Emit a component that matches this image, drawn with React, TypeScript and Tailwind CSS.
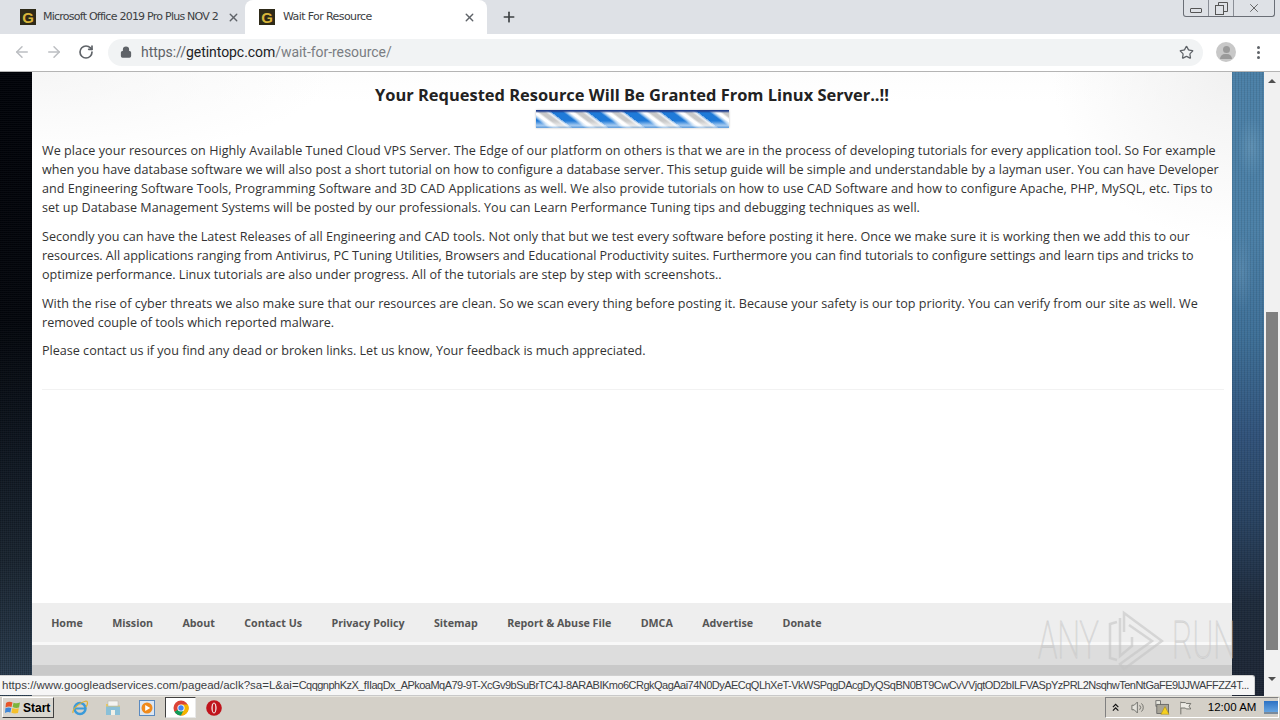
import React from "react";
import { ArrowLeft, ArrowRight, RotateCw, Star, Lock, X, Plus } from "lucide-react";

const Fav = () => (
  <div className="w-4 h-4 bg-[#2e2a18] flex items-center justify-center shrink-0 text-[#d9b53a] font-bold text-[15px] leading-none font-['Liberation_Sans',sans-serif]">G</div>
);

type Line = { t: string; c?: string };

const paragraphs: Line[][] = [
  [
    { t: "We place your resources on Highly Available Tuned Cloud VPS Server. The Edge of our platform on others is that we are in the process of developing tutorials for every application tool. So For example", c: "tracking-[0.055px]" },
    { t: "when you have database software we will also post a short tutorial on how to configure a database server. This setup guide will be simple and understandable by a layman user. You can have Developer", c: "tracking-[0.01px]" },
    { t: "and Engineering Software Tools, Programming Software and 3D CAD Applications as well. We also provide tutorials on how to use CAD Software and how to configure Apache, PHP, MySQL, etc. Tips to", c: "tracking-[0.04px]" },
    { t: "set up Database Management Systems will be posted by our professionals. You can Learn Performance Tuning tips and debugging techniques as well.", c: "tracking-[0.015px]" },
  ],
  [
    { t: "Secondly you can have the Latest Releases of all Engineering and CAD tools. Not only that but we test every software before posting it here. Once we make sure it is working then we add this to our", c: "tracking-[0.015px]" },
    { t: "resources. All applications ranging from Antivirus, PC Tuning Utilities, Browsers and Educational Productivity suites. Furthermore you can find tutorials to configure settings and learn tips and tricks to", c: "tracking-[-0.04px]" },
    { t: "optimize performance. Linux tutorials are also under progress. All of the tutorials are step by step with screenshots.." },
  ],
  [
    { t: "With the rise of cyber threats we also make sure that our resources are clean. So we scan every thing before posting it. Because your safety is our top priority. You can verify from our site as well. We", c: "tracking-[0.01px]" },
    { t: "removed couple of tools which reported malware." },
  ],
  [{ t: "Please contact us if you find any dead or broken links. Let us know, Your feedback is much appreciated." }],
];

const nav = ["Home", "Mission", "About", "Contact Us", "Privacy Policy", "Sitemap", "Report & Abuse File", "DMCA", "Advertise", "Donate"];

export default function App() {
  return (
    <div className="relative w-[1280px] h-[720px] overflow-hidden flex flex-col bg-white font-['Open_Sans',sans-serif]">
      {/* tab strip */}
      <div className="h-[34px] bg-[#dee1e6] flex items-end pl-2 shrink-0 relative">
        <div className="w-[237px] h-[34px] flex items-center pl-3 pr-2 gap-[7px]">
          <Fav />
          <span className="text-[11px] text-[#3c4043] whitespace-nowrap w-[176px] font-['DejaVu_Sans',sans-serif] tracking-[-0.76px]">Microsoft Office 2019 Pro Plus NOV 2</span>
          <X size={13} strokeWidth={2.5} className="text-[#5f6368] ml-[2px] shrink-0" />
        </div>
        <div className="w-[242px] h-[34px] bg-white rounded-t-lg flex items-center pl-[14px] pr-[11px] gap-[8px]">
          <Fav />
          <span className="text-[11px] text-[#3c4043] whitespace-nowrap grow font-['DejaVu_Sans',sans-serif] tracking-[-0.6px]">Wait For Resource</span>
          <X size={13} strokeWidth={2.5} className="text-[#5f6368] shrink-0" />
        </div>
        <div className="w-11 h-[34px] flex items-center justify-center">
          <Plus size={16} strokeWidth={2.5} className="text-[#3c4043]" />
        </div>
        <div className="ml-auto mr-[5px] self-start h-[17px] w-[92px] flex border border-t-0 border-[#6a6e76] rounded-b-[3px] text-[#555]">
          <div className="w-[25px] border-r border-[#8a8e96] flex items-center justify-center">
            <div className="w-[12px] h-[5px] mt-[5px] border border-[#555] rounded-[1px]" />
          </div>
          <div className="w-[25px] border-r border-[#8a8e96] flex items-center justify-center">
            <svg width="13" height="13" viewBox="0 0 13 13" fill="none" stroke="#555"><rect x="0.5" y="3.5" width="8" height="9" /><path d="M3.5 3.5v-3h9v9h-4" /></svg>
          </div>
          <div className="grow flex items-center justify-center">
            <X size={14} strokeWidth={1.5} />
          </div>
        </div>
      </div>

      {/* toolbar */}
      <div className="h-[38px] bg-white border-b border-[#b4b4b4] flex items-center shrink-0 pb-[1px]">
        <ArrowLeft size={18} strokeWidth={2} className="text-[#bcbec2] ml-[13px]" />
        <ArrowRight size={18} strokeWidth={2} className="text-[#bcbec2] ml-[14px]" />
        <RotateCw size={16} strokeWidth={2.5} className="text-[#5f6368] ml-[15px]" />
        <div className="ml-[14px] w-[1095px] h-[27px] bg-[#f1f3f4] rounded-full flex items-center pl-3">
          <Lock size={12} strokeWidth={2.5} className="text-[#5f6368] fill-[#5f6368]" />
          <span className="ml-[9px] text-[14px] font-['Roboto',sans-serif] text-[#202124] whitespace-nowrap tracking-[-0.05px]">
            <span className="text-[#5f6368]">https://</span>getintopc.com<span className="text-[#7a7d82]">/wait-for-resource/</span>
          </span>
          <Star size={15} strokeWidth={2} className="text-[#5f6368] ml-auto mr-[9px]" />
        </div>
        <div className="ml-[13px] w-5 h-5 rounded-full bg-[#c8c8c8] flex flex-col items-center justify-center gap-[1px]">
          <div className="w-[7px] h-[7px] rounded-full bg-[#9a9a9a]" />
          <div className="w-3 h-[5px] rounded-t-full bg-[#9a9a9a]" />
        </div>
        <div className="ml-[21px] flex flex-col gap-[2px]">
          <div className="w-[3px] h-[3px] rounded-full bg-[#5f6368]" />
          <div className="w-[3px] h-[3px] rounded-full bg-[#5f6368]" />
          <div className="w-[3px] h-[3px] rounded-full bg-[#5f6368]" />
        </div>
      </div>

      {/* page */}
      <div className="flex grow min-h-0">
        <div className="w-8 shrink-0 bg-[repeating-linear-gradient(0deg,rgba(255,255,255,0.03)_0_1px,transparent_1px_2px),repeating-linear-gradient(90deg,rgba(0,0,0,0.18)_0_1px,transparent_1px_2px),linear-gradient(180deg,#000208_0%,#03060c_40%,#0e1620_60%,#1a2531_78%,#2c4054_100%)]" />
        <div className="w-[1200px] shrink-0 flex flex-col bg-[radial-gradient(ellipse_180px_170px_at_100%_0,#f1f1f1,transparent),radial-gradient(ellipse_300px_90px_at_0_0,#f6f6f6,transparent),linear-gradient(180deg,#fdfdfd_0,#ffffff_30px)]">
          <div className="pt-[11px] px-[10px] flex flex-col grow">
            <h1 className="text-center text-[16.45px] leading-[24px] font-bold text-[#222] whitespace-nowrap">Your Requested Resource Will Be Granted From Linux Server..!!</h1>
            <div className="mt-[3px] mx-auto w-[193px] h-[18px] relative shadow-[0_0_2px_#bbbbbb] bg-[repeating-linear-gradient(37deg,#1f7ad8_0_7px,#a9cdf0_9px,#ffffff_11px_13px,#c8c8c8_15px_18px,#eef2f7_20px,#6fa8e4_22px)]">
              <div className="absolute inset-0 bg-[linear-gradient(180deg,#1f3d8c_0,#1f3d8c_1px,rgba(255,255,255,0)_3px,rgba(255,255,255,0)_60%,rgba(255,255,255,0.6)_85%,rgba(120,170,220,0.7)_100%)]" />
            </div>
            <div className="mt-[13px] text-[12.58px] leading-[19px] text-[#333]">
              {paragraphs.map((p, i) => (
                <div key={i} className={i === 2 ? "mb-[9px]" : "mb-[10px]"}>
                  {p.map((l, j) => (
                    <div key={j} className={`whitespace-nowrap ${l.c ?? ""}`}>{l.t}</div>
                  ))}
                </div>
              ))}
            </div>
            <div className="mt-[19px] -mr-[2px] h-px bg-[#f2f2f2]" />
          </div>
          <div className="h-[39px] bg-[#eeeeee] flex items-center pl-[4.5px] pt-[2px] shrink-0">
            {nav.map((n) => (
              <span key={n} className="px-[14.7px] text-[10.7px] font-bold text-[#555] whitespace-nowrap">{n}</span>
            ))}
          </div>
          <div className="h-[3px] bg-[#f8f8f8] shrink-0" />
          <div className="h-[20px] bg-[#dddddd] shrink-0" />
          <div className="h-[31px] bg-[#c9c9c9] shrink-0" />
        </div>
        <div className="w-8 shrink-0 bg-[repeating-linear-gradient(90deg,rgba(0,0,0,0.09)_0_1px,transparent_1px_3px),repeating-linear-gradient(0deg,rgba(255,255,255,0.03)_0_1px,transparent_1px_2px),radial-gradient(ellipse_14px_30px_at_60%_12%,rgba(150,190,215,0.25),transparent),radial-gradient(ellipse_12px_40px_at_30%_32%,rgba(140,180,210,0.22),transparent),linear-gradient(180deg,#4a7fa6_0%,#4a7fa6_25%,#3d6f97_42%,#30527a_58%,#27415f_72%,#1d2a3b_85%,#1c2433_100%)]" />
        <div className="w-4 shrink-0 bg-[#f1f1f1] flex flex-col items-center">
          <div className="h-[17px] flex items-center justify-center shrink-0">
            <div className="w-0 h-0 border-x-[4px] border-x-transparent border-b-[4px] border-b-[#505050]" />
          </div>
          <div className="h-[223px] shrink-0" />
          <div className="w-3 h-[338px] bg-[#808080] shrink-0" />
          <div className="grow" />
          <div className="h-[26px] pb-[9px] flex items-center justify-center shrink-0">
            <div className="w-0 h-0 border-x-[4px] border-x-transparent border-t-[4px] border-t-[#505050]" />
          </div>
        </div>
      </div>

      {/* taskbar */}
      <div className="h-6 bg-[#d4d0c8] flex items-center shrink-0 border-t border-[#e8e6df] pb-[2px] font-['Liberation_Sans',sans-serif]">
        <div className="ml-[2px] w-[52px] h-[21px] bg-[#d9d6cf] border border-t-white border-l-white border-r-[#404040] border-b-[#404040] flex items-center pl-[2px] gap-[1px]">
          <svg width="16" height="15" viewBox="0 0 16 15">
            <path d="M1 3 Q4 1 7.5 2.5 L6.5 7 Q3.5 6 0.5 7.5Z" fill="#e8562a" />
            <path d="M8.5 2.7 Q12 4 15 2.5 L14 7.5 Q11 8.5 7.6 7Z" fill="#7db53c" />
            <path d="M0.4 8.3 Q3.5 7 6.3 8 L5.4 12.5 Q2.5 11.5 0 13Z" fill="#3f87d8" />
            <path d="M7.3 8 Q10.5 9.4 13.8 8.3 L13 13 Q9.5 14 6.4 12.7Z" fill="#f5c02c" />
          </svg>
          <span className="text-[12px] font-bold text-black leading-none ml-[1px]">Start</span>
        </div>
        <div className="ml-[17px] flex items-center">
          <svg width="18" height="18" viewBox="0 0 18 18" fill="none">
            <circle cx="9" cy="9.5" r="5.5" stroke="#3a9ad9" strokeWidth="2.5" />
            <path d="M4 9.5h10" stroke="#3a9ad9" strokeWidth="2" />
            <path d="M2 14C1 10 9 3 15 2c2 0 2 3 0 6" stroke="#e0b030" strokeWidth="1.2" />
          </svg>
          <svg className="ml-[16px]" width="16" height="16" viewBox="0 0 16 16">
            <path d="M1 4h5l1 1.5h8V15H1Z" fill="#e8c860" />
            <rect x="3" y="1" width="10" height="5" fill="#f4f4f0" stroke="#b0b0a8" strokeWidth="0.5" />
            <path d="M1 6.5h14V15H1Z" fill="#8ac0d8" />
            <rect x="6" y="10" width="4" height="5" fill="#f0f0e8" />
          </svg>
          <svg className="ml-[18px]" width="16" height="16" viewBox="0 0 16 16">
            <rect x="0.5" y="0.5" width="15" height="15" fill="#dce6f2" stroke="#5a8ac0" />
            <circle cx="8" cy="8" r="5.5" fill="#f08a1c" />
            <path d="M6.2 5v6l5-3Z" fill="#fff" />
          </svg>
          <div className="ml-[10px] w-[31px] h-[21px] bg-white border border-t-[#404040] border-l-[#404040] border-r-[#e8e8e8] border-b-[#e8e8e8] flex items-center justify-center">
            <svg width="16" height="16" viewBox="0 0 16 16">
              <circle cx="8" cy="8" r="7.5" fill="#db4437" />
              <path d="M8 8 L1.5 11.8 A7.5 7.5 0 0 0 8 15.5 L12 9Z" fill="#0f9d58" />
              <path d="M8 4.5h6.9A7.5 7.5 0 0 1 8 15.5L11 9.5Z" fill="#f4b400" />
              <circle cx="8" cy="8" r="3.6" fill="#fff" />
              <circle cx="8" cy="8" r="2.7" fill="#4285f4" />
            </svg>
          </div>
          <svg className="ml-[10px]" width="16" height="16" viewBox="0 0 16 16">
            <circle cx="8" cy="8" r="7.8" fill="#c0141c" />
            <ellipse cx="8" cy="8" rx="2.6" ry="5.4" fill="#f4e8e8" />
            <ellipse cx="8" cy="8" rx="1.3" ry="4.6" fill="#c0141c" />
          </svg>
        </div>
        <div className="ml-auto mr-[1px] w-[174px] h-[21px] border border-t-[#808080] border-l-[#808080] border-r-white border-b-white flex items-center pl-[6px]">
          <svg width="8" height="9" viewBox="0 0 8 9" fill="none" stroke="#111" strokeWidth="1.3"><path d="M1 4l3-3 3 3M1 8l3-3 3 3" /></svg>
          <svg className="ml-[12px]" width="16" height="15" viewBox="0 0 16 15" fill="none" stroke="#6a6a64" strokeWidth="1"><path d="M1 5h2.5L7 1.5v12L3.5 10H1Z" fill="#e4e2dc" /><path d="M9.5 5a3.5 3.5 0 0 1 0 5M11.5 3a6 6 0 0 1 0 9" /></svg>
          <svg className="ml-[9px]" width="17" height="17" viewBox="0 0 17 17">
            <rect x="1" y="1" width="5" height="6" fill="#e8e8e0" stroke="#555" strokeWidth="0.8" />
            <rect x="2" y="5" width="13" height="10" fill="#a8a498" stroke="#555" strokeWidth="0.8" />
            <path d="M11 7.5l4.5 8.5h-9Z" fill="#f6d020" stroke="#a08000" strokeWidth="0.5" />
          </svg>
          <svg className="ml-[9px]" width="15" height="16" viewBox="0 0 15 16" fill="none" stroke="#6a6a64"><path d="M2 1v14" /><path d="M2 2h5l1 1h5l-2 3 2 3H8L7 8H2" fill="#eceae4" /></svg>
          <span className="ml-[15px] text-[11.5px] text-black whitespace-nowrap">12:00 AM</span>
          <div className="ml-[8px] w-[15px] h-[13px] bg-[linear-gradient(180deg,#2c72c4,#66a4e0)] border-b-2 border-[#7a8a9a]" />
        </div>
      </div>

      {/* status bubble */}
      <div className="absolute left-0 top-[675px] w-[1255px] h-[20px] bg-[#f6f6f6] border-t border-r border-[#d0d0d0] rounded-tr-[3px] pl-[2px] text-[11.5px] leading-[18px] text-[#3c4043] whitespace-nowrap overflow-hidden font-['Liberation_Sans',sans-serif]">
        https://www.googleadservices.com/pagead/aclk?sa=L&amp;ai=<span className="text-[11px] tracking-[-0.52px]">CqqgnphKzX_fIIaqDx_APkoaMqA79-9T-XcGv9bSuBrTC4J-8ARABIKmo6CRgkQagAai74N0DyAECqQLhXeT-VkWSPqgDAcgDyQSqBN0BT9CwCvVVjqtOD2bILFVASpYzPRL2NsqhwTenNtGaFE9lJJWAFFZZ4T...</span>
      </div>

      {/* watermark */}
      <div className="absolute left-[1038px] top-[610px] h-[62px] w-[194px] flex items-center pointer-events-none">
        <div className="w-[70px] shrink-0">
          <span className="inline-block origin-left scale-x-[0.62] text-[52px] leading-none font-['Roboto',sans-serif] font-thin text-white/30 [-webkit-text-stroke:1px_rgba(185,185,185,0.55)]">ANY</span>
        </div>
        <svg className="shrink-0" width="56" height="62" viewBox="0 0 56 62" fill="none" stroke="#c4c4c4" strokeOpacity="0.6" strokeWidth="2.5">
          <path d="M9 12 L2 14 V48 L9 50" />
          <path d="M16 22 V3 L54 31 L16 59 L12 54 L44 31 L21 15" />
          <path d="M12 8 V46 L24 36 V27" />
        </svg>
        <div className="ml-[8px] w-[60px] shrink-0">
          <span className="inline-block origin-left scale-x-[0.6] text-[52px] leading-none font-['Roboto',sans-serif] font-thin text-white/30 [-webkit-text-stroke:1px_rgba(185,185,185,0.55)]">RUN</span>
        </div>
      </div>
    </div>
  );
}
